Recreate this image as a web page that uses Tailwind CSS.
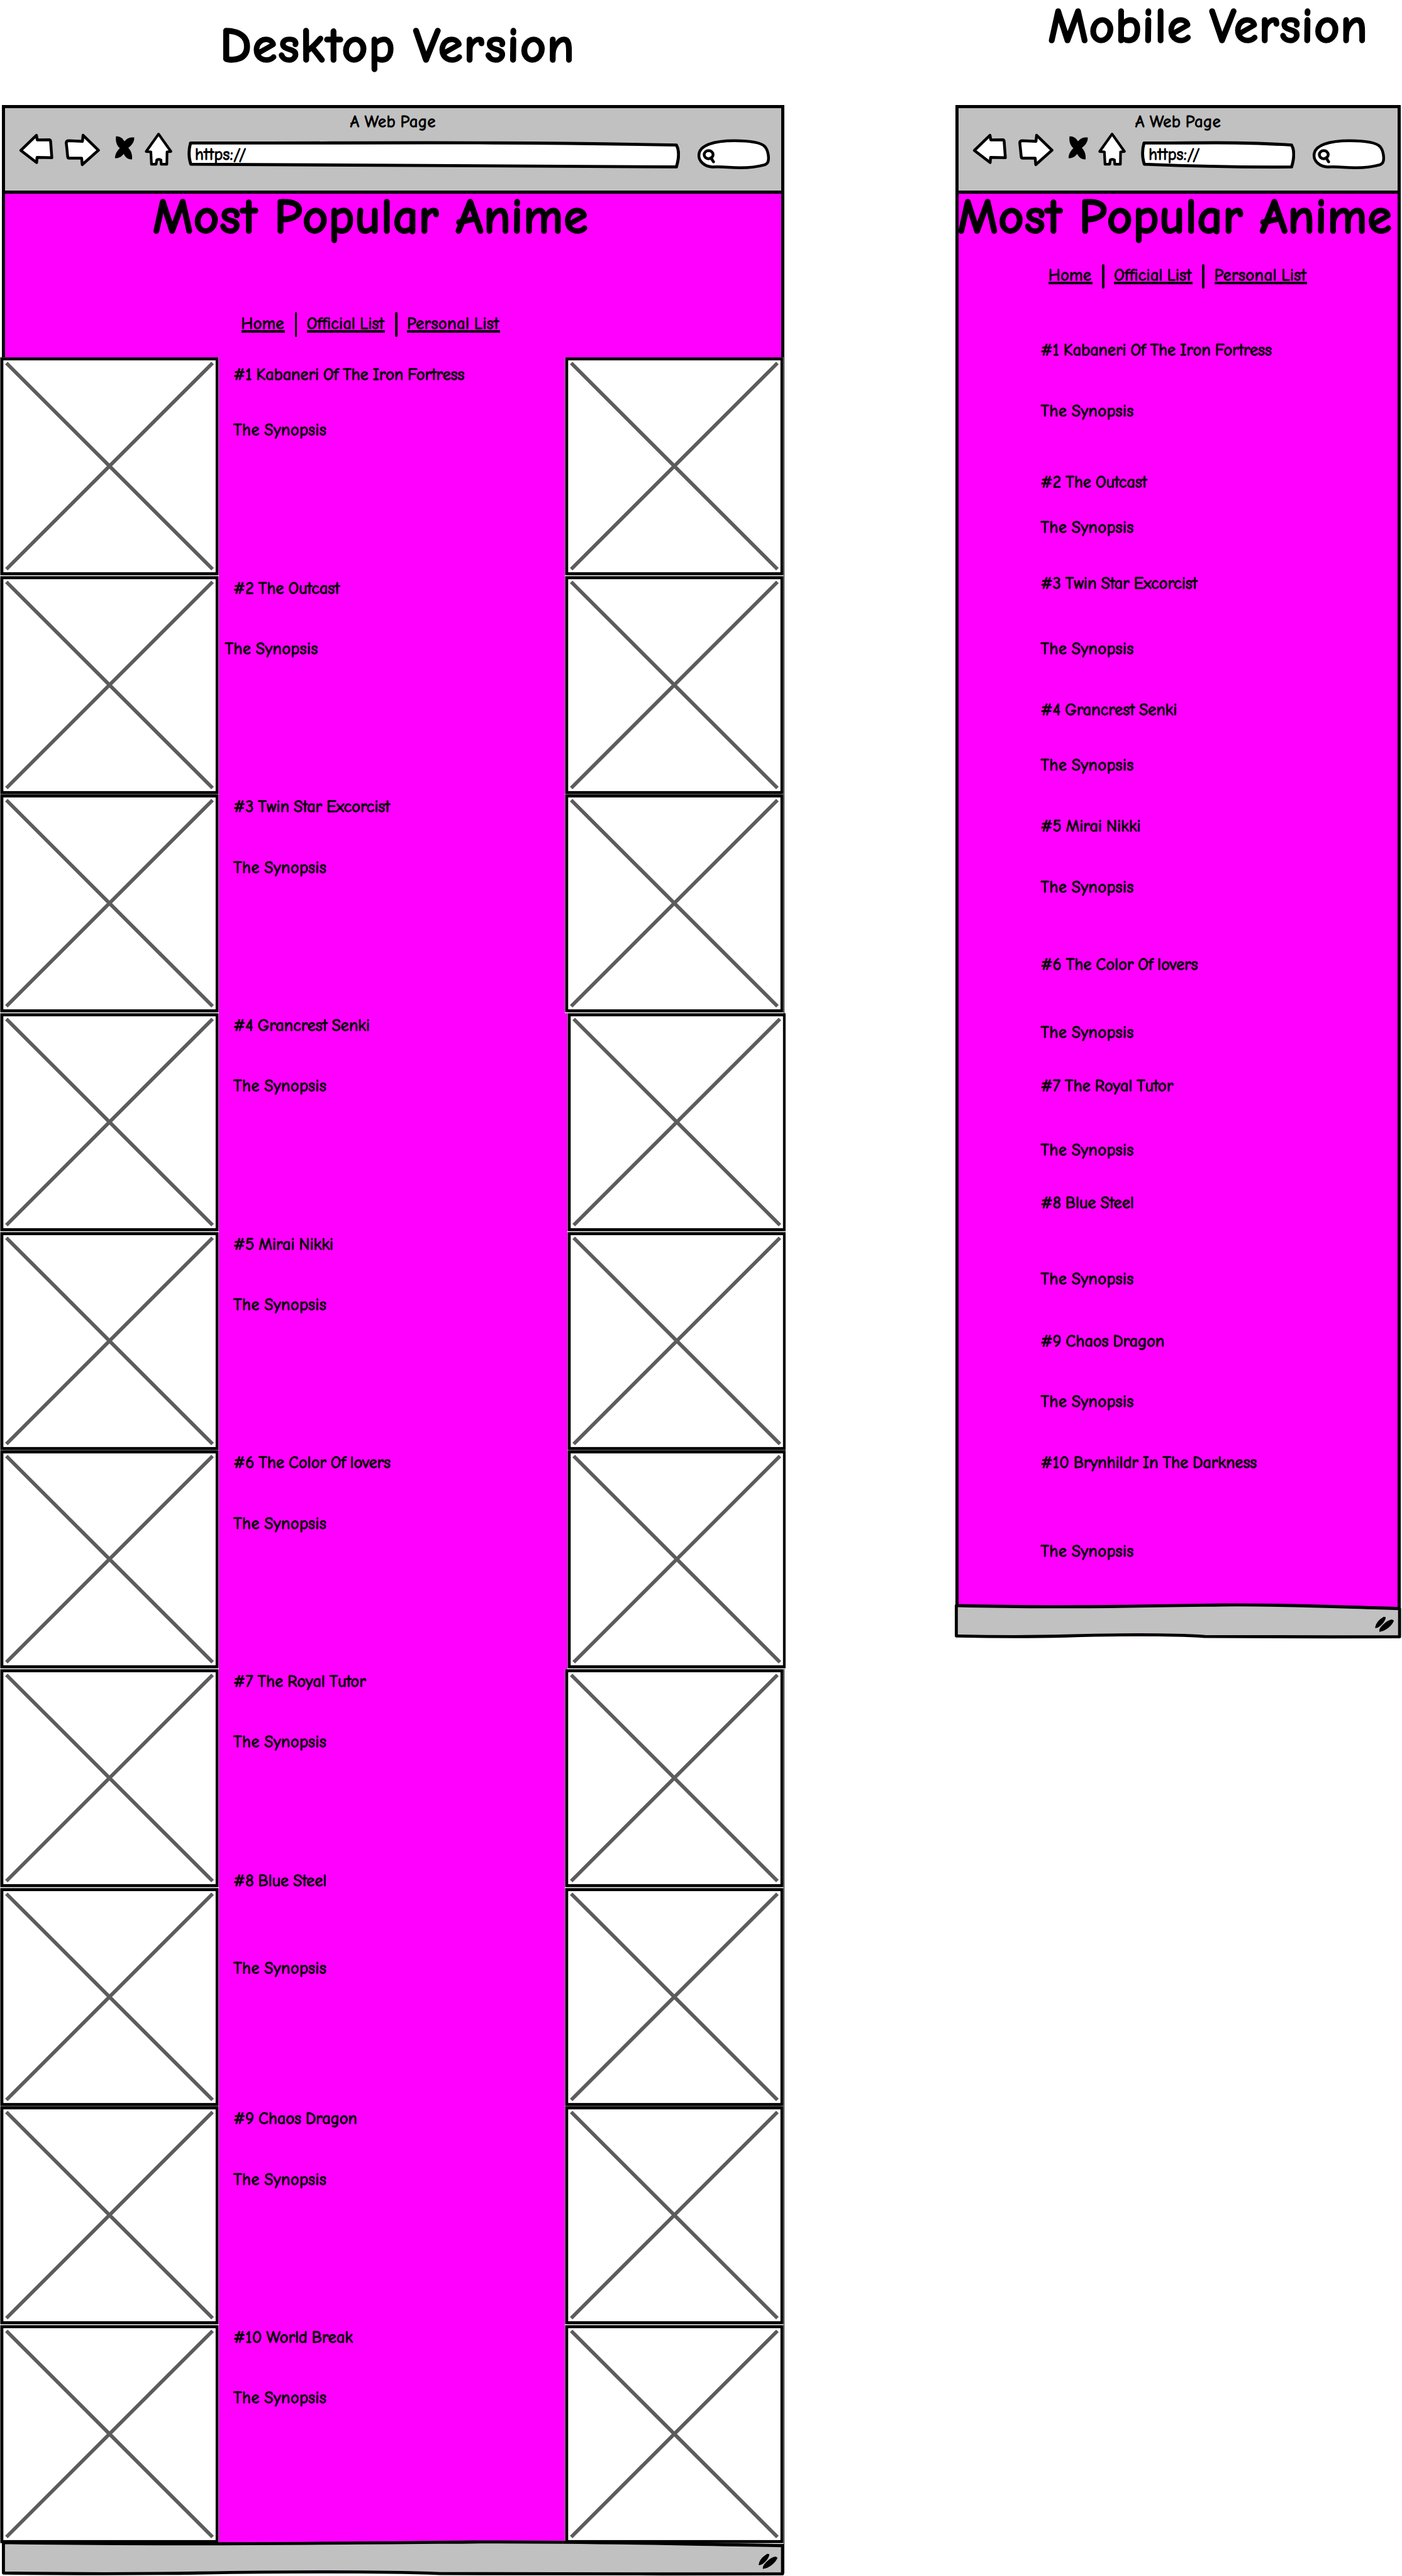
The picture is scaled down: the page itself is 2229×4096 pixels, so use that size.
<!DOCTYPE html>
<html lang="en">
<head>
<meta charset="utf-8">
<title>Most Popular Anime wireframe</title>
<script src="https://cdn.jsdelivr.net/npm/@tailwindcss/browser@4"></script>
</head>
<body class="bg-white overflow-hidden">
<!-- Sketch icons shared by both browser windows -->
<svg class="hidden">
  <symbol id="back" viewBox="90 165 210 180"><path d="M106 262 L183 187 L187 210 L246 209 Q252 209 253 217 L259 298 L186 296 L184 322 Z" fill="#fff" stroke="#000" stroke-width="14" stroke-linejoin="round"/></symbol>
  <symbol id="forward" viewBox="300 165 255 180"><path d="M342 214 L409 217 L412 187 L488 261 L408 332 L405 300 L343 300 Q337 300 336 292 Q333 260 329 225 Q329 214 342 214 Z" fill="#fff" stroke="#000" stroke-width="14" stroke-linejoin="round"/></symbol>
  <symbol id="stop" viewBox="555 165 150 180"><path d="M575 192 C598 191 608 203 617 217 C630 201 645 196 665 198 C666 218 655 236 636 249 C650 265 657 285 654 306 C632 307 622 296 613 279 C600 294 590 301 570 300 C570 280 580 264 594 251 C577 235 572 215 575 192Z"/></symbol>
  <symbol id="home" viewBox="705 165 201 180"><path d="M786 181 L847 267 L828 269 L827 330 L799 330 L798 309 Q787 303 777 309 L774 330 L751 330 L748 269 L725 267 Z" fill="#fff" stroke="#000" stroke-width="13" stroke-linejoin="round"/></symbol>
  <symbol id="search" viewBox="738 165 372 210"><g fill="#fff" stroke="#000" stroke-width="14" stroke-linecap="round" stroke-linejoin="round"><path d="M820 344 C780 340 753 315 754 285 C756 235 830 214 930 214 C1000 214 1060 222 1080 243 C1098 265 1100 300 1096 315 C1094 325 1088 330 1078 333 C1010 352 950 349 900 345 C870 343 840 342 820 344Z"/><ellipse cx="802" cy="283" rx="22" ry="20"/><path d="M813 298 L826 318"/></g></symbol>
  <symbol id="photo" viewBox="0 0 360 360"><rect x="3" y="2.7" width="354.5" height="353.8" fill="#fff" stroke="#000" stroke-width="5"/><path d="M10.5 9.500 L350 349 M350 9.500 L10.500 349" stroke="#5c5c5c" stroke-width="6"/></symbol>
  <symbol id="grip" viewBox="752 190 98 80"><path d="M752 248 Q757 215 796 192 L806 194 Q808 203 795 222 Q776 247 756 250Z M774 269 Q770 255 790 235 Q815 209 838 206 L848 212 Q840 232 818 250 Q795 267 774 269Z"/></symbol>
</svg>

<div class="[zoom:0.96577] flex w-[2308px] h-[4242px] overflow-hidden text-black font-normal font-['Comic_Neue',Lato,sans-serif] text-[26.500px] [word-spacing:-2px] [-webkit-text-stroke:1.300px_#000] whitespace-nowrap">
  <section class="w-[1288px] ml-[3px] shrink-0">
    <h1 class="h-[173px] pl-[359px] leading-[151px] font-bold text-[84px] tracking-[0.9px] [-webkit-text-stroke:1.500px_#000]">Desktop Version</h1>
    <main id="desktop"></main>
  </section>
  <section class="w-[733px] ml-[282px] shrink-0">
    <h1 class="h-[173px] pl-[152px] leading-[87px] font-bold text-[83px] tracking-[0.6px] [-webkit-text-stroke:1.500px_#000]">Mobile Version</h1>
    <main id="mobile"></main>
  </section>
</div>

<script>
const toolbar = (urlWidth) => `
  <header class="h-[146px] bg-[#c1c1c1] border-y-[5.2px] border-black">
    <p class="h-[37px] leading-[45px] text-center tracking-[0.9px]">A Web Page</p>
    <div class="flex pl-[21px]">
      <svg class="w-[70px] h-[60px]"><use href="#back"/></svg>
      <svg class="w-[85px] h-[60px]"><use href="#forward"/></svg>
      <svg class="w-[50px] h-[60px]"><use href="#stop"/></svg>
      <svg class="w-[67px] h-[60px]"><use href="#home"/></svg>
      <div class="grid ml-[7px]">
        <svg class="col-start-1 row-start-1 h-[70px]" width="${urlWidth}" viewBox="0 0 ${urlWidth} 70"><path d="M5 20 C${urlWidth*.3} 21 ${urlWidth*.6} 17 ${urlWidth-6} 23.500 Q${urlWidth+1} 36 ${urlWidth-6} 59.500 C${urlWidth*.7} 60 ${urlWidth*.4} 59 5.500 55 Q0 38 5 20Z" fill="#fff" stroke="#000" stroke-width="5" stroke-linejoin="round"/></svg>
        <span class="col-start-1 row-start-1 pl-[13px] leading-[78px] tracking-[0.7px]">https://</span>
      </div>
      <svg class="w-[124px] h-[70px] ml-[26px]"><use href="#search"/></svg>
    </div>
  </header>`;
const statusBar = `
  <footer class="relative h-[53px] -mx-[5px] -mt-[4px]">
    <svg class="block w-full h-[60px] overflow-visible" viewBox="0 0 1000 60" preserveAspectRatio="none"><path d="M2 2 C200 6 420 3 600 1 C740 0 850 4 998 7 L998 53.500 C850 53.500 650 54 560 53 C480 49 350 50 250 52 C150 54 60 53 2 52Z" fill="#c1c1c1" stroke="#000" stroke-width="5" stroke-linejoin="round" vector-effect="non-scaling-stroke"/></svg>
    <svg class="absolute right-[10px] top-[20px] w-[32px] h-[26px]"><use href="#grip"/></svg>
  </footer>`;
const nav = `
  <a class="border-b-[4.2px] border-black leading-[24px] h-[27px] w-[72px] tracking-[0.6px]">Home</a>
  <i class="w-[4px] h-[41px] mx-4 rounded bg-black"></i>
  <a class="border-b-[4.2px] border-black leading-[24px] h-[27px] w-[129px] tracking-[0.5px]">Official List</a>
  <i class="w-[4px] h-[41px] mx-4 rounded bg-black"></i>
  <a class="border-b-[4.2px] border-black leading-[24px] h-[27px] w-[153px] tracking-[0.8px]">Personal List</a>`;

// [title, title offset in its row, gap to synopsis, right photo shift, synopsis shift]
const rows = [
  ['#1 Kabaneri Of The Iron Fortress', 8, 52, 0, 0], ['#2 The Outcast', 0, 60, 0, -14],
  ['#3 Twin Star Excorcist', 0, 60, 0, 0], ['#4 Grancrest Senki', 0, 60, 4, 0],
  ['#5 Mirai Nikki', 0, 60, 4, 0], ['#6 The Color Of lovers', 0, 60, 4, 0],
  ['#7 The Royal Tutor', 0, 60, 0, 0], ['#8 Blue Steel', -32, 104, 0, 0],
  ['#9 Chaos Dragon', 0, 60, 0, 0], ['#10 World Break', 0, 60, 0, 0]];
document.getElementById('desktop').innerHTML = `
  <div class="border-x-[5.2px] border-black bg-[#ff00ff]">
    ${toolbar(811)}
    <div class="h-[269px] flex flex-col">
      <h2 class="h-[175px] pl-[243px] leading-[77px] font-bold text-[83px] tracking-[0.1px] [-webkit-text-stroke:1.500px_#000]">Most Popular Anime</h2>
      <nav class="flex items-center h-[80px] pl-[389px]">${nav}</nav>
    </div>
    <div class="-ml-[8px] w-[1290px]">
      ${rows.map(([t, a, b, dx, sx]) => `
      <article class="flex h-[360px]">
        <svg class="w-[360px] h-[360px] shrink-0 bg-white"><use href="#photo"/></svg>
        <div class="w-[569.500px] shrink-0 pl-[24px] flex flex-col">
          <h3 class="leading-[41px] h-[40px] tracking-[0.3px]" style="margin-top:${a}px">${t}</h3>
          <p class="leading-[41px] h-[40px] tracking-[0.7px]" style="margin-top:${b}px;margin-left:${sx}px">The Synopsis</p>
        </div>
        <svg class="w-[360px] h-[360px] shrink-0 bg-white" style="margin-left:${dx}px"><use href="#photo"/></svg>
      </article>`).join('')}
    </div>
    ${statusBar}
  </div>`;

// Text line and the gap above it
const lines = [
  ['#1 Kabaneri Of The Iron Fortress', 61], ['', 60], ['#2 The Outcast', 78], ['', 34], ['#3 Twin Star Excorcist', 52], ['', 68],
  ['#4 Grancrest Senki', 60], ['', 52], ['#5 Mirai Nikki', 60], ['', 60], ['#6 The Color Of lovers', 88], ['', 72],
  ['#7 The Royal Tutor', 48], ['', 65], ['#8 Blue Steel', 47], ['', 86], ['#9 Chaos Dragon', 62], ['', 60],
  ['#10 Brynhildr In The Darkness', 60], ['', 106]];
document.getElementById('mobile').innerHTML = `
  <div class="border-x-[5.2px] border-black bg-[#ff00ff]">
    ${toolbar(254)}
    <div class="h-[2326px] flex flex-col">
      <h2 class="h-[96px] -ml-[2px] leading-[77px] font-bold text-[83px] [-webkit-text-stroke:1.500px_#000]">Most Popular Anime</h2>
      <nav class="flex items-center h-[80px] pl-[148px]">${nav}</nav>
      <div class="flex flex-col pl-[135px]">
        ${lines.map(([t, g]) => `<p class="leading-[41px] h-[40px] ${t ? 'tracking-[0.3px]' : 'tracking-[0.7px]'}" style="margin-top:${g}px">${t || 'The Synopsis'}</p>`).join('')}
      </div>
    </div>
    ${statusBar}
  </div>`;
</script>
</body>
</html>
